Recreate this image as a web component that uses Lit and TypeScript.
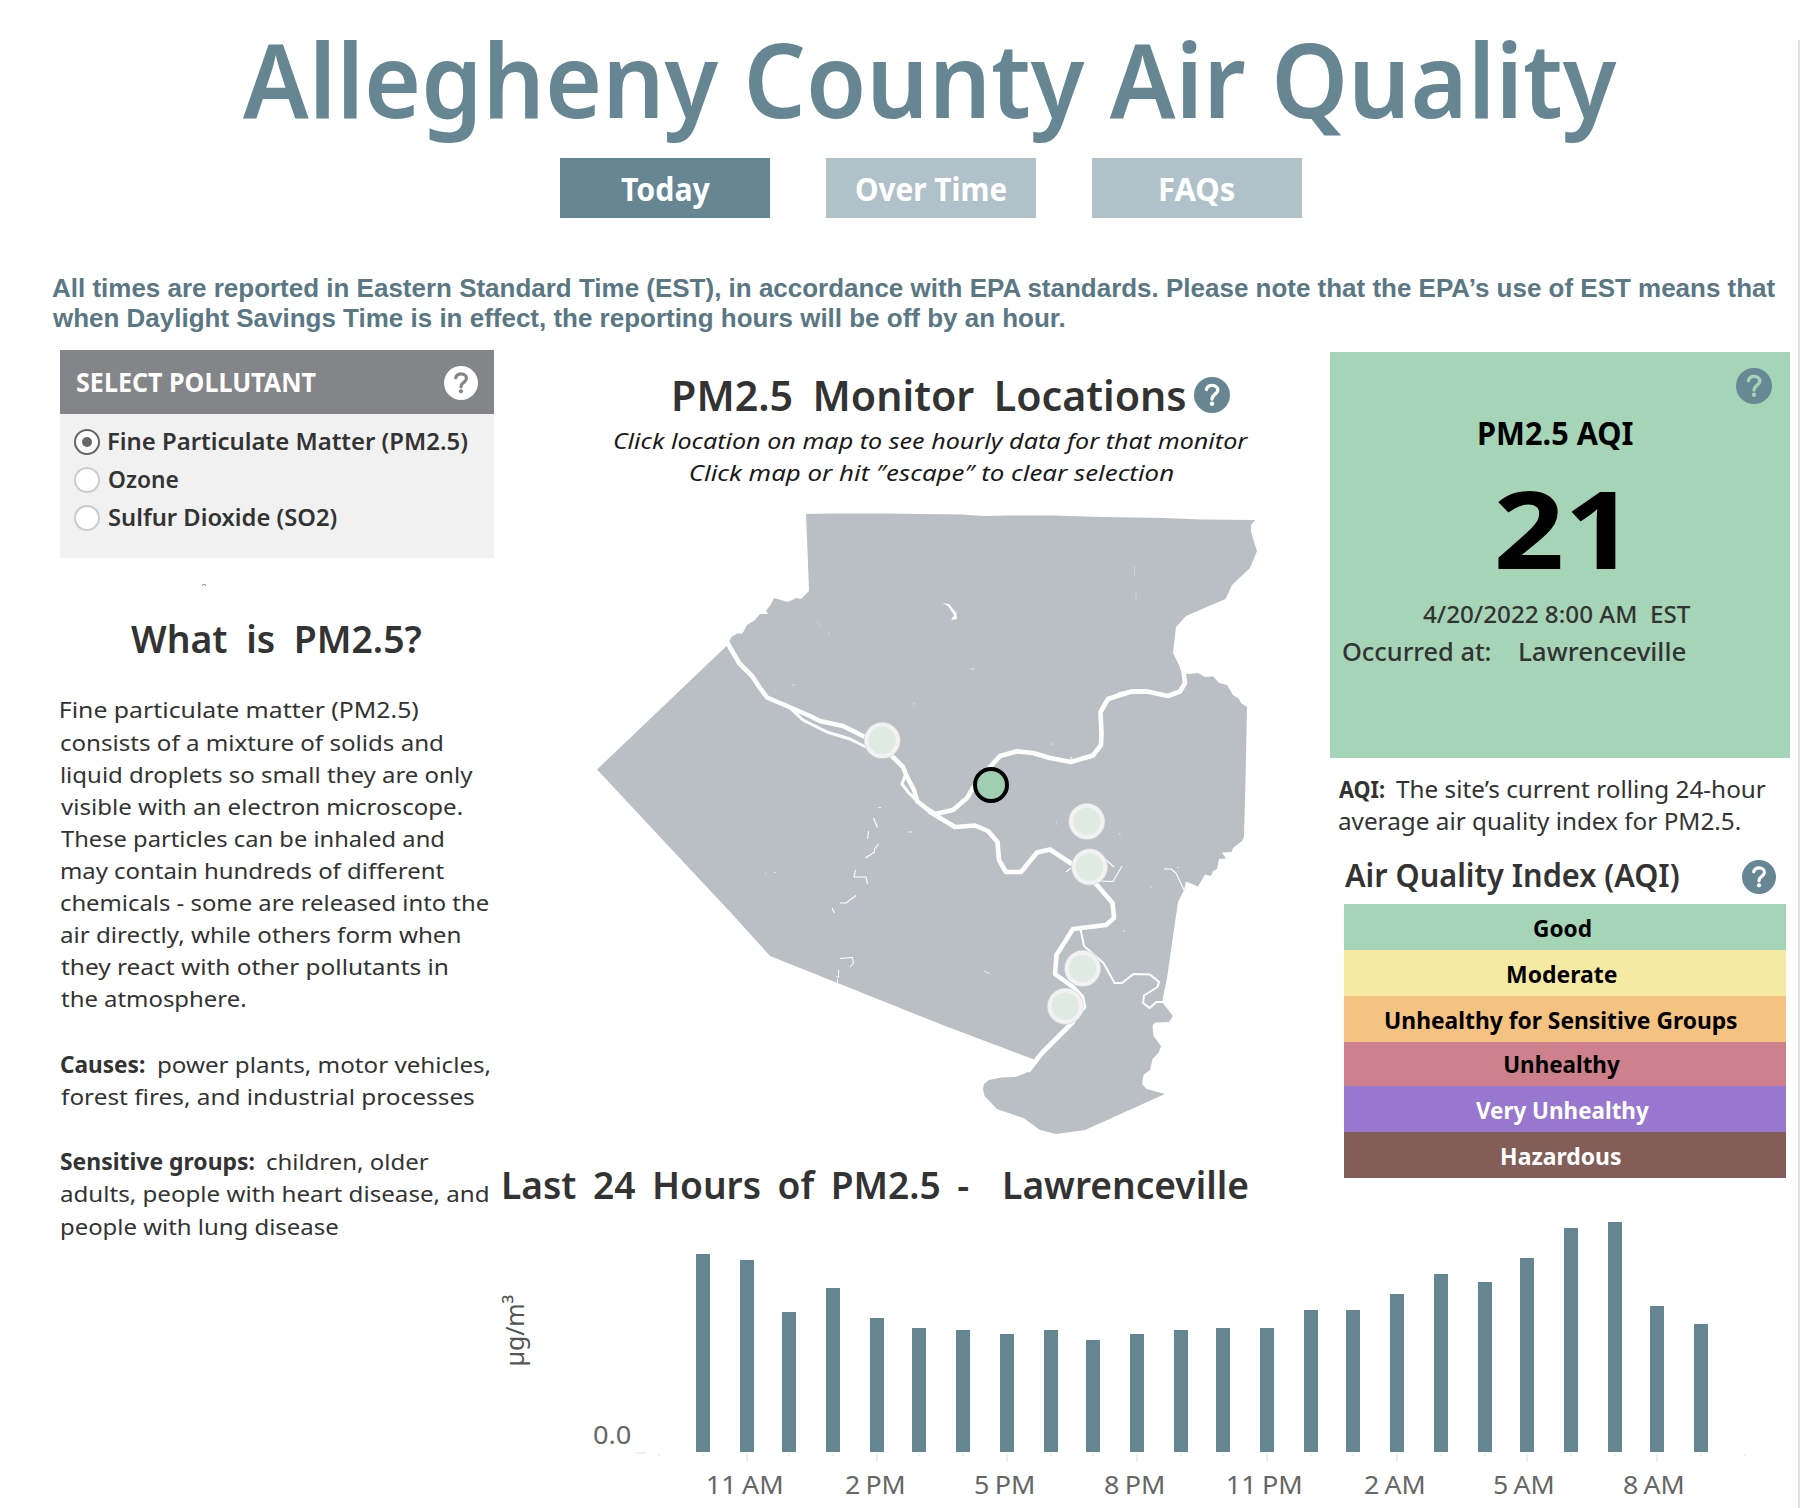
import { LitElement, html, css, svg } from 'lit';
import { customElement, property } from 'lit/decorators.js';
import { classMap } from 'lit/directives/class-map.js';

const measureCtx = document.createElement('canvas').getContext('2d')!;

/** One line of text, condensed or expanded so that its ink has an exact width. */
@customElement('fitted-text')
export class FittedText extends LitElement {
  static styles = css`
    :host {
      display: block;
      flex: none;
      white-space: pre;
    }
    .ink {
      display: block;
      width: max-content;
      transform-origin: 0 0;
    }
  `;
  @property() text = '';
  @property({ type: Number }) width = 0;

  updated() {
    const style = getComputedStyle(this);
    measureCtx.font = `${style.fontStyle} ${style.fontWeight} ${style.fontSize} ${style.fontFamily}`;
    const m = measureCtx.measureText(this.text);
    const words = (parseFloat(style.wordSpacing) || 0) * (this.text.split(' ').length - 1);
    const ratio = this.width / (m.actualBoundingBoxLeft + m.actualBoundingBoxRight + words);
    const ink = this.renderRoot.querySelector<HTMLElement>('.ink')!;
    ink.style.transform = `translateX(${m.actualBoundingBoxLeft * ratio}px) scaleX(${ratio})`;
    this.style.width = `${this.width}px`;
  }

  render() {
    return html`<span class="ink">${this.text}</span>`;
  }
}

const fit = (text: string, width: number, cls = '') =>
  html`<fitted-text class=${cls} .text=${text} .width=${width}></fitted-text>`;

/** Round help badge with a question mark. */
@customElement('help-badge')
export class HelpBadge extends LitElement {
  static styles = css`
    :host {
      display: block;
      flex: none;
      width: var(--badge-size, 36px);
      height: var(--badge-size, 36px);
    }
    svg {
      display: block;
      width: 100%;
      height: 100%;
    }
    .disc {
      fill: var(--badge-disc, #668694);
    }
    .hook {
      fill: none;
      stroke: var(--badge-mark, #fff);
      stroke-width: 3.4;
      stroke-linecap: round;
      stroke-linejoin: round;
    }
    .dot {
      fill: var(--badge-mark, #fff);
    }
  `;
  render() {
    return html`<svg viewBox="-18 -18 36 36" aria-hidden="true">
      <circle class="disc" r="18"></circle>
      <path class="hook" d="M-5.6 -5.6C-4.8 -8.2 -2.6 -9.6 .2 -9.6C3.4 -9.6 5.8 -7.6 5.8 -4.9C5.8 -2.6 4.2 -1.6 2.4 -.2C.6 1.2 0 2.2 0 4"></path>
      <circle class="dot" cy="8.8" r="2.2"></circle>
    </svg>`;
  }
}

/** County map with rivers and the monitoring sites. */
@customElement('county-map')
export class CountyMap extends LitElement {
  static styles = css`
    :host {
      display: block;
    }
    svg {
      display: block;
      width: 680px;
      height: 640px;
    }
    .land {
      fill: #b9bfc5;
    }
    .river {
      fill: none;
      stroke: #fff;
      stroke-linejoin: round;
      stroke-linecap: round;
    }
    .wide {
      stroke-width: 4.6;
    }
    .mid {
      stroke-width: 3;
    }
    .thin {
      stroke-width: 2;
    }
    .creek {
      stroke-width: 1.1;
      stroke-linecap: butt;
    }
    .site {
      fill: #e0eae4;
      stroke: #f2f2f2;
      stroke-width: 4;
    }
    .halo {
      fill: #d0d4d7;
    }
    .selected {
      fill: #9fcfb0;
      stroke: #000;
      stroke-width: 4;
    }
  `;
  render() {
    const sites = [
      [882.2, 740.4],
      [1086.8, 821.4],
      [1089.6, 867],
      [1082.6, 968.4],
      [1065.4, 1006.3],
    ];
    return html`<svg viewBox="590 505 680 640" role="img" aria-label="Allegheny County">
      <path class="land" d="M806 514L830 513.5L883 513.5L961 514.5L984 516L1007 515.5L1053 515.5L1102 517L1163 518L1200 519.5L1255 520L1251 525L1251 532L1257 551L1250 568L1232 585L1225.5 599L1186 616L1176 627L1173 653L1183 673L1190 674L1198 673L1205 677L1213 676.5L1219 683L1227 685L1233 695L1239 699L1241 703L1247 707L1245.5 780L1244 837L1242 841L1233 848L1231.5 852L1222 852.5L1226 858.5L1219 859L1217 869L1213 871L1211 876L1205 874.5L1198 886.5L1186 881.5L1184 890L1178 902L1167 978L1162 1002L1173 1016L1169 1022L1155 1022.5L1152.5 1026L1153.5 1036L1161 1046L1159 1052L1152.5 1059L1150 1070L1143.5 1075L1142 1084L1146.5 1089L1165 1094L1085 1130L1056 1134L1040 1130L1023.5 1118L997 1109L984.5 1096L983 1089L984 1084L989 1080L1001 1077.5L1015 1077L1026 1073L1034 1067L1039 1060L1034 1059.5L940 1024L770 956L732 914L597 769.5L726 646.5L728 643.5L731.5 637L737 633.5L742.5 633.5L747 625L754.5 620.5L760 614L768 614L766 610.5L770.5 605L774 598L788 602L796 598L801 599L809 591L807.500 550Z"></path>

      <path class="river wide" d="M727 642L739 663L752 676L760 688L767 697.500L787 706L810 716L820 721L843 726L865 737L882 748L893 757L903 767L907 777L914 790L917 801L927 809L935 814"></path>
      <path class="river mid" d="M790 708L803 720L827 732L850 739L868 748"></path>
      <path class="river mid" d="M905 776L902 784L908 792L917 801"></path>
      <path class="river wide" d="M935 814L953 810L967 798L978 780L1000 756L1018 751"></path>
      <path class="river wide" d="M1018 751.500L1033 753L1050 758L1071 762L1093 755.500L1101 745L1101.500 733L1100.500 712L1108 699L1130 692L1147 691.500L1168 696L1180 691.500L1185 683L1183.500 671L1180 661"></path>
      <path class="river mid" d="M1106 701L1120 693.500L1134 690.500L1146 690.500"></path>
      <path class="river wide" d="M930 812L955 827L975 825.500L988 831L997.500 842L999 860L1006 872L1021 872L1037 852.500L1050 849.500L1072 864L1097 885L1112.500 903L1114 918L1106 925L1073 929L1056.500 955L1055 974L1073 987L1082 997L1084 1007L1073 1022L1042 1053L1034 1063L1029 1070"></path>
      <path class="river thin" d="M1080.500 929L1084 946L1103.500 963L1114.500 983L1122 983L1133.500 974L1150 974.500L1159 982L1157.500 987L1144 995.500L1143 1003L1149.500 1008L1156.500 1002L1163 1002"></path>
      <path class="river creek" d="M1100 881L1113 881.500L1122 866M1164 869L1171 869L1176 873L1184 890M1103 857L1114 867"></path>
      <path class="river creek" d="M1066 872L1071 868M1071 762V757M873.500 818L877.500 827.500M868.500 831L867.500 839M878.500 844L874.500 849V852L865.500 858M855.500 870L854 877L866 877L867.500 884M856 895.500L846 903H840M832 908L834.500 913M840 958.500L852.500 957.500L853.500 963L850 967M838.500 970V977H836M837.500 979V983"></path>
      <path d="M942 603L949 604L953 609L956 613V608.500L957 619L951 620L954 615L948 606Z" fill="#fff"></path>
      <path d="M817 621L822 627M828 632L830 635M1134.500 566V575M1136 590V600M1052 742V745M1056.500 821V825" stroke="#d3d7da" stroke-width=".8"></path>
      <path d="M792.500 685h2M913.500 704h1.500M774 872.500h1.500M1050.500 744h1M1150 887h1.500M1177 867.500h1.500M1119 834h1.500M765 874h1M1123 931h2M984 971l6 3M971 669h3M908 832h4M878 807.500h3" stroke="#eef0f1" stroke-width="1"></path>

      ${sites.map(
        ([x, y]) => svg`<circle class="halo" cx=${x} cy=${y} r="18.4"></circle><circle class="site" cx=${x} cy=${y} r="15.7"></circle>`,
      )}
      <circle class="selected" cx="991" cy="785" r="16"></circle>
    </svg>`;
  }
}

/** Left edge (px) and height (px) of every hourly bar. */
const BARS: Array<[number, number]> = [
  [696, 198], [740, 192], [782, 140], [826, 164], [870, 134], [912, 124],
  [956, 122], [1000, 118], [1044, 122], [1086, 112], [1130, 118], [1174, 122],
  [1216, 124], [1260, 124], [1304, 142], [1346, 142], [1390, 158], [1434, 178],
  [1478, 170], [1520, 194], [1564, 224], [1608, 230], [1650, 146], [1694, 128],
];

const HOURS: Array<[string, number]> = [
  ['11 AM', 74], ['2 PM', 58], ['5 PM', 58.5], ['8 PM', 58.5],
  ['11 PM', 73], ['2 AM', 59], ['5 AM', 59], ['8 AM', 59],
];

@customElement('hourly-chart')
export class HourlyChart extends LitElement {
  static styles = css`
    :host {
      display: block;
      color: #666;
      font-size: 25px;
    }
    .plot {
      display: flex;
      align-items: flex-end;
      height: 243px;
    }
    .unit {
      writing-mode: vertical-rl;
      transform: rotate(180deg);
      width: 36px;
      line-height: 36px;
      margin: 0 0 86px 2px;
      color: #555;
      letter-spacing: -0.2px;
    }
    .zero {
      font-size: 26px;
      line-height: 35px;
      margin: 0 65.5px 0 62px;
    }
    .bars {
      display: flex;
      align-items: flex-end;
    }
    .bar {
      width: 14px;
      background: #668694;
    }
    .ticks {
      display: block;
      width: 1126px;
      height: 12px;
      margin-left: 136px;
    }
    .hours {
      display: flex;
      margin-left: 185.7px;
      line-height: 41px;
      word-spacing: -1.5px;
    }
    .hour {
      display: flex;
      justify-content: center;
      width: 129.9px;
    }
  `;
  render() {
    const minor = [659, ...BARS.map(([x]) => x + 7), 1745];
    return html`
      <div class="plot">
        <div class="unit">µg/m³</div>
        ${fit('0.0', 36.5, 'zero')}
        <div class="bars">
          ${BARS.map(([x, h], i) => {
            const slot = i + 1 < BARS.length ? BARS[i + 1][0] - x : 14;
            return html`<div style="width:${slot}px"><div class="bar" style="height:${h}px"></div></div>`;
          })}
        </div>
      </div>
      <svg class="ticks" viewBox="630 1452 1126 12">
        <rect x="636" y="1452" width="10" height="2" fill="#f0f0f0"></rect>
        ${minor.map(
          (x, i) => svg`<rect x=${x - 1} y="1454" width="2" height=${i % 3 === 2 ? 8 : 2} fill="#f0f0f0"></rect>`,
        )}
      </svg>
      <div class="hours">${HOURS.map(([t, w]) => html`<div class="hour">${fit(t, w)}</div>`)}</div>
    `;
  }
}

const TABS: Array<[string, number, boolean]> = [
  ['Today', 89, true],
  ['Over Time', 150.5, false],
  ['FAQs', 74.5, false],
];

const POLLUTANTS: Array<[string, number, boolean]> = [
  ['Fine Particulate Matter (PM2.5)', 358.3, true],
  ['Ozone', 69, false],
  ['Sulfur Dioxide (SO2)', 227.5, false],
];

const ABOUT: Array<[string, number]> = [
  ['Fine particulate matter (PM2.5)', 357],
  ['consists of a mixture of solids and', 381],
  ['liquid droplets so small they are only', 412],
  ['visible with an electron microscope.', 401],
  ['These particles can be inhaled and', 382],
  ['may contain hundreds of different', 383],
  ['chemicals - some are released into the', 427.5],
  ['air directly, while others form when', 399.5],
  ['they react with other pollutants in', 387],
  ['the atmosphere.', 184.5],
];

const LEVELS: Array<[string, number, string]> = [
  ['Good', 57, 'good'],
  ['Moderate', 109, 'moderate'],
  ['Unhealthy for Sensitive Groups', 351.5, 'sensitive'],
  ['Unhealthy', 115, 'unhealthy'],
  ['Very Unhealthy', 173, 'very'],
  ['Hazardous', 119.5, 'hazardous'],
];

@customElement('app-root')
export class AppRoot extends LitElement {
  static styles = css`
    :host {
      display: block;
      box-sizing: border-box;
      width: 1800px;
      height: 1508px;
      overflow: hidden;
      background: linear-gradient(#e0e0e0, #e0e0e0) right 0 top 40px / 2px 100% no-repeat #fff;
      font-family: 'Noto Sans', sans-serif;
      color: #333;
    }
    h1,
    h2,
    p {
      margin: 0;
      font: inherit;
    }
    .title {
      padding: 18px 0 0 243.4px;
      font-size: 103.6px;
      font-weight: 600;
      line-height: 120px;
      color: #668694;
    }
    .tabs {
      display: flex;
      gap: 56px;
      margin: 20px 0 0 560px;
    }
    .tab {
      display: flex;
      justify-content: center;
      width: 210px;
      height: 60px;
      line-height: 62px;
      font-size: 31.3px;
      font-weight: 700;
      color: #fff;
      background: #b1c1c9;
    }
    .tab.active {
      background: #668694;
    }
    .notice {
      margin: 54.7px 0 17.3px 51.8px;
      font: bold 26px/30px 'Liberation Sans', sans-serif;
      color: #5a7884;
    }
    .main {
      display: grid;
      grid-template-columns: 434px 836px 460px;
      grid-template-rows: 859px 299px;
      margin-left: 60px;
    }
    .side {
      grid-row: 1 / 3;
    }
    .chart {
      grid-column: 2 / 4;
    }
    .panel-head {
      display: flex;
      align-items: center;
      justify-content: space-between;
      height: 64px;
      padding: 0 16px 0 16.7px;
      line-height: 64px;
      font-size: 26px;
      font-weight: 700;
      color: #fff;
      background: #848589;
      --badge-size: 34px;
      --badge-disc: #fff;
      --badge-mark: #848589;
    }
    .panel-head help-badge {
      margin-top: 2px;
    }
    .panel-body {
      box-sizing: border-box;
      height: 144px;
      padding: 9px 0 0 14px;
      background: #f1f1f1;
    }
    .option {
      display: flex;
      align-items: center;
      gap: 9px;
      height: 38px;
      line-height: 36px;
      padding-bottom: 0;
      font-size: 23.6px;
      font-weight: 600;
    }
    .option fitted-text {
      height: 38px;
    }
    .radio {
      box-sizing: border-box;
      display: grid;
      place-items: center;
      width: 26px;
      height: 26px;
      border: 2px solid #ccc;
      border-radius: 50%;
      background: #fff;
    }
    .radio.on {
      border-color: #666;
    }
    .radio.on::after {
      content: '';
      width: 10px;
      height: 10px;
      border-radius: 50%;
      background: #666;
    }
    .speck {
      box-sizing: border-box;
      width: 4px;
      height: 2px;
      margin: 26px 0 27px 142px;
      border: 1px solid #7d98a4;
      border-bottom: none;
      border-radius: 2px 2px 0 0;
    }
    .about-title {
      padding-left: 70.7px;
      font-size: 38px;
      line-height: 50px;
      font-weight: 600;
      word-spacing: 9px;
    }
    .about {
      margin: 31.5px 0 0 1.3px;
      font-size: 22.4px;
      line-height: 32.05px;
    }
    .para + .para {
      margin-top: 33.7px;
    }
    .lead {
      display: flex;
    }
    .strong {
      font-weight: 700;
    }
    .map-title {
      display: flex;
      align-items: center;
      gap: 9px;
      padding: 14.7px 0 0 180px;
      font-size: 42px;
      line-height: 60px;
      font-weight: 600;
      word-spacing: 9px;
    }
    .hint {
      display: flex;
      flex-direction: column;
      align-items: center;
      margin-left: 37px;
      width: 800px;
      height: 63.3px;
      font-size: 22.4px;
      line-height: 32px;
      font-style: italic;
      color: #1a1a1a;
    }
    county-map {
      margin: 17px 0 0 96px;
    }
    .chart-title {
      padding: 14.3px 0 0 10.3px;
      font-size: 38px;
      line-height: 50px;
      font-weight: 600;
      word-spacing: 7px;
    }
    .card {
      box-sizing: border-box;
      height: 406px;
      margin-top: 2px;
      padding-top: 16px;
      background: #a6d4b7;
      --badge-mark: #a6d4b7;
      --badge-disc: #668995;
    }
    .card help-badge {
      margin: 0 18px 8.6px auto;
    }
    .card-title {
      margin-left: 149px;
      font-size: 32px;
      line-height: 40px;
      font-weight: 700;
      color: #000;
    }
    .value {
      margin: 20px 0 15.5px 168px;
      font-size: 108px;
      line-height: 110px;
      font-weight: 700;
      color: #000;
    }
    .stamp {
      margin: 0 0 2.8px 92.7px;
      font-size: 23.8px;
      line-height: 32px;
      font-weight: 500;
    }
    .where {
      display: flex;
      gap: 28.7px;
      margin-left: 13.3px;
      font-size: 25px;
      line-height: 36px;
      font-weight: 500;
    }
    .note {
      margin: 15px 0 14.6px 8.7px;
      font-size: 23px;
      line-height: 32px;
    }
    .note .lead {
      gap: 12px;
    }
    .index-title {
      display: flex;
      justify-content: space-between;
      margin: 0 14px 8.4px 14.7px;
      font-size: 32px;
      line-height: 45px;
      font-weight: 600;
      height: 44px;
      --badge-size: 34px;
    }
    .index-title help-badge {
      margin-top: 8.4px;
    }
    .legend {
      margin: 0 4px 0 14px;
    }
    .level {
      box-sizing: border-box;
      display: flex;
      justify-content: center;
      height: 46px;
      padding-right: 6px;
      line-height: 48px;
      font-size: 24px;
      font-weight: 700;
      color: #000;
    }
    .good {
      background: #a6d4b7;
    }
    .moderate {
      background: #f6e9a3;
    }
    .sensitive {
      background: #f4c281;
    }
    .unhealthy {
      height: 44px;
      line-height: 44px;
      background: #ce808c;
    }
    .very {
      color: #fff;
      background: #9877d0;
    }
    .hazardous {
      color: #fff;
      background: #835e58;
    }
  `;

  render() {
    return html`
      <h1 class="title">${fit('Allegheny County Air Quality', 1373.6)}</h1>
      <nav class="tabs">
        ${TABS.map(([t, w, active]) => html`<div class=${classMap({ tab: true, active })}>${fit(t, w)}</div>`)}
      </nav>
      <div class="notice">
        ${fit('All times are reported in Eastern Standard Time (EST), in accordance with EPA standards. Please note that the EPA’s use of EST means that', 1724.5)}
        ${fit('when Daylight Savings Time is in effect, the reporting hours will be off by an hour.', 1012.5)}
      </div>
      <main class="main">
        <section class="side">
          <div class="panel-head">${fit('SELECT POLLUTANT', 239)}<help-badge></help-badge></div>
          <div class="panel-body">
            ${POLLUTANTS.map(
              ([t, w, on]) => html`<div class="option"><span class=${classMap({ radio: true, on })}></span>${fit(t, w)}</div>`,
            )}
          </div>
          <div class="speck"></div>
          <h2 class="about-title">${fit('What is PM2.5?', 290.3)}</h2>
          <div class="about">
            <div class="para">${ABOUT.map(([t, w]) => fit(t, w))}</div>
            <div class="para">
              <div class="lead" style="gap:12.7px">${fit('Causes:', 84, 'strong')}${fit('power plants, motor vehicles,', 332)}</div>
              ${fit('forest fires, and industrial processes', 413)}
            </div>
            <div class="para">
              <div class="lead" style="gap:12px">${fit('Sensitive groups:', 193.7, 'strong')}${fit('children, older', 161.3)}</div>
              ${fit('adults, people with heart disease, and', 426.7)}
              ${fit('people with lung disease', 277)}
            </div>
          </div>
        </section>
        <section class="center">
          <h2 class="map-title">${fit('PM2.5 Monitor Locations', 511)}<help-badge></help-badge></h2>
          <div class="hint">
            ${fit('Click location on map to see hourly data for that monitor', 634.5)}
            ${fit('Click map or hit ″escape″ to clear selection', 483)}
          </div>
          <county-map></county-map>
          <h2 class="chart-title">${fit('Last 24 Hours of PM2.5 -  Lawrenceville', 743.7)}</h2>
        </section>
        <section class="aqi">
          <div class="card">
            <help-badge></help-badge>
            ${fit('PM2.5 AQI', 154, 'card-title')} ${fit('21', 117.7, 'value')}
            ${fit('4/20/2022 8:00 AM  EST', 268, 'stamp')}
            <div class="where">${fit('Occurred at:', 147.7)}${fit('Lawrenceville', 166)}</div>
          </div>
          <div class="note">
            <div class="lead">${fit('AQI:', 45.6, 'strong')}${fit('The site’s current rolling 24-hour', 370.4)}</div>
            ${fit('average air quality index for PM2.5.', 401)}
          </div>
          <h2 class="index-title">${fit('Air Quality Index (AQI)', 334.3)}<help-badge></help-badge></h2>
          <div class="legend">
            ${LEVELS.map(([t, w, cls]) => html`<div class=${`level ${cls}`}>${fit(t, w)}</div>`)}
          </div>
        </section>
        <section class="chart"><hourly-chart></hourly-chart></section>
      </main>
    `;
  }
}
